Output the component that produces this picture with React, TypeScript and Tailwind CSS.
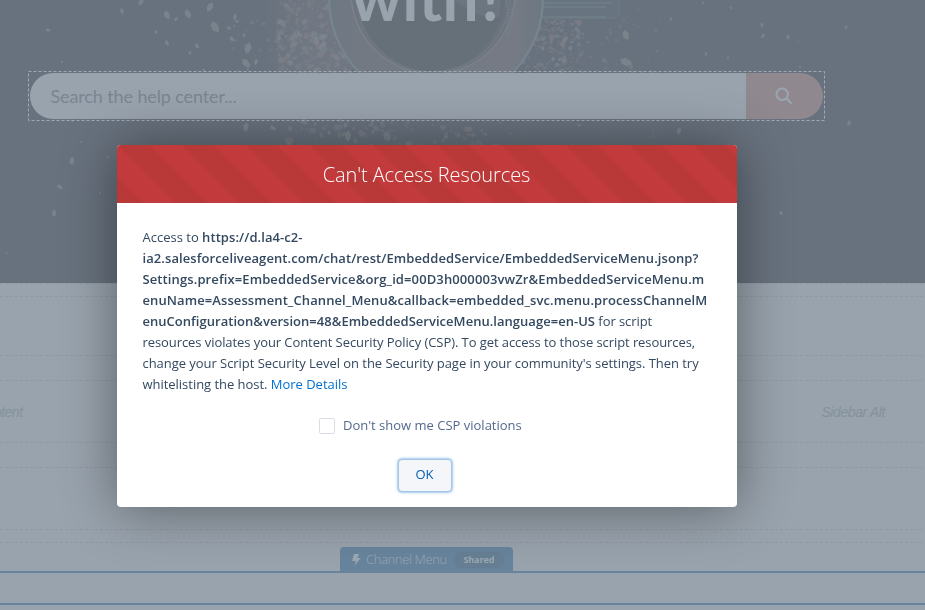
import React from "react";

// Small deterministic generator so the scattered crystals keep their places.
function makeRandom(seed: number) {
  let s = seed;
  for (let i = 0; i < 5; i++) s = (s * 16807) % 2147483647;
  return () => {
    s = (s * 16807) % 2147483647;
    return s / 2147483647;
  };
}

type Grain = { x: number; y: number; r: number; a: number; o: number; warm: boolean };

function scatter(seed: number, count: number, x0: number, x1: number, y0: number, y1: number, min: number, max: number): Grain[] {
  const rnd = makeRandom(seed);
  return Array.from({ length: count }, () => ({
    x: x0 + (x1 - x0) * rnd(),
    y: y0 + (y1 - y0) * rnd(),
    r: min + (max - min) * rnd() * rnd(),
    a: rnd() * 180,
    o: 0.18 + rnd() * 0.4,
    warm: rnd() > 0.5,
  }));
}

const grains: Grain[] = [
  ...scatter(77, 320, 276, 360, -4, 76, 1, 5.4),
  ...scatter(913, 34, 232, 290, 20, 74, 0.8, 4),
  ...scatter(411, 190, 522, 584, 18, 76, 1, 4),
  ...scatter(552, 50, 580, 662, 4, 74, 0.8, 3.4),
  ...scatter(129, 110, 288, 500, 118, 150, 1.2, 5.4),
  ...scatter(660, 20, 500, 720, 118, 150, 0.8, 3.6),
];

const loose: [number, number, number][] = [
  [48, 30, 2.6], [122, 11, 2.8], [141, 2, 3.6], [167, 15, 4.4], [176, 19, 2.4], [188, 14, 4.6],
  [210, 7, 4.8], [215, 27, 6], [156, 32, 2.2], [167, 43, 2.8], [190, 53, 2], [197, 46, 3],
  [248, 48, 5.4], [246, 63, 5], [256, 62, 3], [62, 62, 1.4], [82, 30, 0.8], [204, 70, 2],
  [72, 161, 4], [60, 187, 3.2], [54, 213, 3.4], [108, 157, 1.6], [100, 193, 1.4], [7, 253, 1.2],
  [81, 142, 1.2], [72, 121, 1.4], [626, 35, 5], [626, 62, 6], [762, 25, 2.4], [763, 36, 2.6],
  [788, 37, 2.4], [846, 27, 2], [731, 8, 1.6], [703, 3, 1.6], [800, 67, 1.6], [706, 54, 2],
  [671, 19, 2], [849, 123, 2.8], [781, 213, 2.6], [679, 131, 3.4], [798, 42, 1], [728, 58, 1.6],
  [232, 39, 3], [235, 17, 3], [229, 28, 2.4], [246, 127, 4.4], [273, 128, 3.2], [348, 136, 5],
];

function CoffeePhoto() {
  return (
    <svg className="absolute inset-0" width="925" height="283" viewBox="0 0 925 283" aria-hidden="true">
      <defs>
        <filter id="soft" x="-10%" y="-10%" width="120%" height="120%">
          <feGaussianBlur stdDeviation="0.6" />
        </filter>
        <linearGradient id="rim" x1="0" x2="1">
          <stop offset="0" stopColor="#6d7883" />
          <stop offset="0.14" stopColor="#727983" />
          <stop offset="0.5" stopColor="#737a84" />
          <stop offset="0.88" stopColor="#747a84" />
          <stop offset="1" stopColor="#6c7883" />
        </linearGradient>
        <linearGradient id="heap" x1="0" x2="1">
          <stop offset="0" stopColor="#747a84" stopOpacity="0" />
          <stop offset="0.5" stopColor="#747a84" stopOpacity="0.7" />
          <stop offset="1" stopColor="#747a84" stopOpacity="0.7" />
        </linearGradient>
      </defs>
      <g filter="url(#soft)">
        <rect x="262" y="-4" width="90" height="80" fill="url(#heap)" />
        {grains.map((g, i) => (
          <path
            key={i}
            d="M-1 -.4L-.4 -1L.6 -.8L1 .2L.3 1L-.8 .6Z"
            transform={`translate(${g.x} ${g.y}) rotate(${g.a}) scale(${g.r} ${g.r * 0.75})`}
            fill={g.warm ? "#85838a" : "#808b94"}
            opacity={g.o}
          />
        ))}
        {loose.map(([x, y, r], i) => (
          <path
            key={i}
            d="M-1 -.5L-.1 -.8L.8 -.2L1 .5L.1 .8L-.7 .4Z"
            transform={`translate(${x} ${y}) rotate(${(i * 53) % 110}) scale(${r} ${r * 0.85})`}
            fill="#7f8b93"
            opacity="0.7"
          />
        ))}
        <rect x="535" y="-10" width="84" height="28" rx="6" fill="#687480" stroke="#6f7c87" strokeWidth="1" />
        <path d="M540 3H612M540 7H606M540 17H606" stroke="#75828d" strokeWidth="1" />
        <circle cx="436" cy="-2" r="107" fill="url(#rim)" stroke="#76848e" strokeWidth="2.5" />
        <ellipse cx="433" cy="-8" rx="82" ry="82" fill="#6d757f" stroke="#7a818b" strokeWidth="1.5" />
        <ellipse cx="433" cy="-7" rx="77" ry="79" fill="#6a737e" stroke="#767d88" strokeWidth="1" />
        <ellipse cx="431" cy="-6" rx="74" ry="77" fill="#656f79" />
        <path d="M453 0L478 15L500 18L501 0Z" fill="#737d87" opacity=".5" />
        <g fill="none" stroke="#76818b" strokeWidth="1">
          <ellipse cx="511" cy="4" rx="5" ry="6" />
          <circle cx="510" cy="15" r="2.5" />
          <circle cx="509" cy="22" r="2.2" />
          <circle cx="509" cy="29" r="2" />
          <circle cx="508" cy="35" r="1.6" />
        </g>
      </g>
    </svg>
  );
}

function SearchBar() {
  return (
    <div className="relative ml-7 mt-[71px] h-[50px] w-[797px] p-0.5">
      <svg className="absolute inset-0" width="797" height="50" aria-hidden="true">
        <rect x=".5" y=".5" width="796" height="49" fill="none" stroke="#a0a9b2" strokeDasharray="3 2" />
      </svg>
      <div className="flex h-[46px] w-[793px] overflow-hidden rounded-full">
        <div className="flex w-[716px] items-center bg-[#99a3ad] pl-[20.5px] font-['Lato'] text-[18px] tracking-[-0.12px] text-[#7b8590]">
          <span className="whitespace-nowrap">Search the help center...</span>
        </div>
        <button className="flex flex-1 items-center justify-center bg-[#90888f]">
          <svg width="18" height="18" viewBox="0 0 18 18" fill="none" stroke="#99a5b0" className="-ml-0.5">
            <circle cx="7.2" cy="7.2" r="5.7" strokeWidth="2" />
            <path d="M11.3 11.3L16.7 16.7" strokeWidth="2.2" />
          </svg>
        </button>
      </div>
    </div>
  );
}

function DashedLine() {
  return (
    <svg className="block h-px w-full" aria-hidden="true">
      <path d="M0 .5H925" stroke="#8d99a4" strokeDasharray="3 2" />
    </svg>
  );
}

function PageBody() {
  return (
    <div className="flex h-[327px] flex-col bg-[#99a3ad] font-['Open_Sans']">
      <DashedLine />
      <div className="h-3" />
      <DashedLine />
      <div className="h-[58px]" />
      <DashedLine />
      <div className="h-6" />
      <DashedLine />
      <div className="flex h-[61px] items-center justify-between pr-10 pt-0.5 font-['Liberation_Sans'] text-[14px] italic text-[#84919c]">
        <span className="-ml-[23px] tracking-[-0.5px]">Content</span>
        <span className="tracking-[-0.4px]">Sidebar Alt</span>
      </div>
      <DashedLine />
      <div className="h-6" />
      <DashedLine />
      <div className="h-[61px]" />
      <DashedLine />
      <div className="h-3" />
      <DashedLine />
      <div className="ml-[340px] mt-1 flex h-6 w-[173px] items-center rounded-t-sm bg-[#68849d] pl-3 pt-0.5 text-[#9ba7b2]">
        <svg width="9" height="12" viewBox="0 0 9 12" fill="currentColor">
          <path d="M2 0H7L5.4 4H8.3Q8.8 4 8.4 4.6L2.6 11.6Q2.2 12 2.4 11.3L4 7H.6Q0 7 .2 6.4Z" />
        </svg>
        <span className="ml-[5px] whitespace-nowrap text-[13px] font-light tracking-[-0.36px]">Channel Menu</span>
        <span className="ml-[7px] flex h-4 w-[50px] items-center justify-center rounded-full bg-[#667f94] text-[9px] font-bold tracking-[-0.1px]">Shared</span>
      </div>
      <div className="h-[34px] border-y-2 border-[#68849d]" />
    </div>
  );
}

function CspDialog() {
  return (
    <section
      role="dialog"
      className="absolute left-[117px] top-[145px] flex h-[362px] w-[620px] flex-col overflow-hidden rounded bg-white font-['Open_Sans'] text-[13px] text-[#344960] shadow-[0_2px_54px_rgba(0,0,0,0.42)]"
    >
      <header className="flex h-[58px] shrink-0 items-center justify-center bg-[#c23a3b] bg-[linear-gradient(45deg,#b83937_25%,transparent_25%,transparent_50%,#b83937_50%,#b83937_75%,transparent_75%)] bg-[size:64px_64px] pr-px pt-px text-[20px] font-light tracking-[-0.1px] text-white">
        <h2 className="whitespace-nowrap">Can't Access Resources</h2>
      </header>
      <div className="flex flex-col whitespace-nowrap pl-[25.5px] pt-6 leading-[21px]">
        <p>Access to <b className="font-semibold tracking-[0.08px]">https://d.la4-c2-</b></p>
        <p className="tracking-[0.09px]"><b className="font-semibold">ia2.salesforceliveagent.com/chat/rest/EmbeddedService/EmbeddedServiceMenu.jsonp?</b></p>
        <p className="tracking-[0.11px]"><b className="font-semibold">Settings.prefix=EmbeddedService&amp;org_id=00D3h000003vwZr&amp;EmbeddedServiceMenu.m</b></p>
        <p className="tracking-[0.09px]"><b className="font-semibold">enuName=Assessment_Channel_Menu&amp;callback=embedded_svc.menu.processChannelM</b></p>
        <p><b className="font-semibold tracking-[0.03px]">enuConfiguration&amp;version=48&amp;EmbeddedServiceMenu.language=en-US</b><span className="tracking-[-0.07px]"> for script</span></p>
        <p className="tracking-[-0.075px]">resources violates your Content Security Policy (CSP). To get access to those script resources,</p>
        <p className="tracking-[-0.045px]">change your Script Security Level on the Security page in your community's settings. Then try</p>
        <p className="tracking-[-0.03px]">whitelisting the host. <a className="text-[#0070d2]">More Details</a></p>
      </div>
      <label className="ml-[202px] mt-[22px] flex h-[18px] items-center gap-2 text-[#54698d]">
        <span className="h-4 w-4 rounded-[2px] border border-[#d8dde6] bg-white" />
        <span className="whitespace-nowrap">Don't show me CSP violations</span>
      </label>
      <button className="ml-[280.5px] mt-[23.5px] flex h-[33px] w-[54px] items-center justify-center rounded-[4px] border border-[#a9c4e3] bg-[#f4f6f9] text-[#005fb2] shadow-[0_0_3px_rgba(0,112,210,0.75)]">
        OK
      </button>
    </section>
  );
}

export default function App() {
  return (
    <main className="relative h-[610px] w-[925px] overflow-hidden bg-[#99a3ad]">
      <div className="relative flex h-[283px] flex-col overflow-hidden bg-[#68727e]">
        <CoffeePhoto />
        <h1 className="absolute left-[351px] top-[-41px] whitespace-nowrap font-['Lato'] text-[64px] font-bold leading-[76px] text-[#99a3ad]">with?</h1>
        <SearchBar />
      </div>
      <PageBody />
      <CspDialog />
    </main>
  );
}
